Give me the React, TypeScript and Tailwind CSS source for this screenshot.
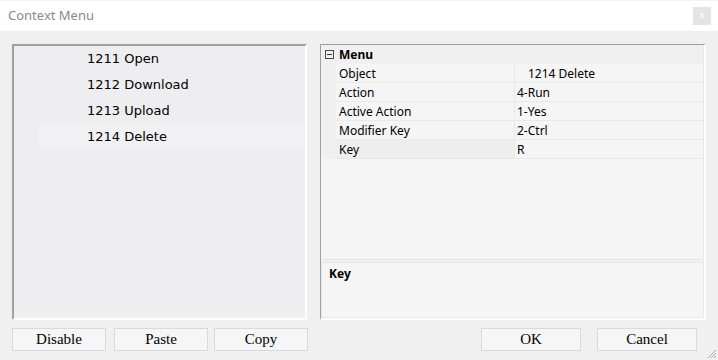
import React from "react";

const items = ["1211 Open", "1212 Download", "1213 Upload", "1214 Delete"];

const props = [
  { label: "Object", value: "1214 Delete", indent: true },
  { label: "Action", value: "4-Run" },
  { label: "Active Action", value: "1-Yes" },
  { label: "Modifier Key", value: "2-Ctrl" },
  { label: "Key", value: "R", selected: true },
];

function DlgButton({ text, className }: { text: string; className?: string }) {
  return (
    <button
      className={`h-[23px] border border-[#d9d9e1] bg-[#f6f6f6] text-[15px] leading-none text-black font-['Liberation_Serif',serif] ${className ?? ""}`}
    >
      {text}
    </button>
  );
}

export default function App() {
  return (
    <div className="w-[718px] h-[360px] flex flex-col overflow-hidden bg-[#f0f0f0] relative">
      {/* title bar */}
      <div className="h-[31px] bg-white border-t border-[#f3f3f3] flex items-center justify-between pl-[8px] pr-[7px]">
        <span className="text-[13px] text-[#8a8a8a] font-['Noto_Sans',sans-serif] -mt-[1px]">
          Context Menu
        </span>
        <div className="w-[18px] h-[18px] bg-[#e4e4e4] flex items-center justify-center text-[9px] text-white font-['DejaVu_Sans',sans-serif] -mt-[1px]">
          x
        </div>
      </div>

      {/* body */}
      <div className="flex-1 flex flex-col px-[12px] pt-[13px]">
        <div className="flex gap-[13px] h-[276px]">
          {/* left list */}
          <div className="w-[295px] border-l-2 border-t-2 border-[#a0a0a0] border-r-2 border-b-2 border-r-white border-b-white bg-[#eeeef0]">
            {items.map((it, i) => (
              <div
                key={it}
                className={`h-[26px] flex items-center text-[13px] text-black font-['DejaVu_Sans',sans-serif] ${
                  i === 3 ? "ml-[24px] pl-[49px] bg-[#f1f1f3]" : "pl-[73px]"
                }`}
              >
                {it}
              </div>
            ))}
          </div>

          {/* property grid */}
          <div className="w-[386px] border-l border-t border-[#a0a0a0] border-r-2 border-b-2 border-r-white border-b-white bg-[#f0f0f0] flex flex-col font-['Noto_Sans',sans-serif] text-[12px] text-black">
            <div className="h-[215px] bg-[#f5f5f5] border-r border-b border-[#e6e6e6] flex flex-col">
              <div className="h-[19px] bg-[#f0f0f0] flex items-center">
                <div className="ml-[4px] w-[9px] h-[9px] border border-[#4a4a4a] flex items-center justify-center">
                  <div className="w-[5px] h-[1px] bg-[#333]" />
                </div>
                <span className="ml-[5px] font-bold leading-none">Menu</span>
              </div>
              {props.map((p) => (
                <div key={p.label} className="h-[19px] flex">
                  <div className="w-[15px] bg-[#f0f0f0]" />
                  <div
                    className={`w-[178px] flex items-center pl-[3px] pt-[1px] border-b border-[#e9e9e9] ${
                      p.selected ? "bg-[#eeeeee]" : "bg-[#f5f5f5]"
                    }`}
                  >
                    {p.label}
                  </div>
                  <div
                    className={`flex-1 flex items-center pt-[1px] border-l border-b border-[#e9e9e9] bg-[#f5f5f5] ${
                      p.indent ? "pl-[13px]" : "pl-[2px]"
                    }`}
                  >
                    {p.value}
                  </div>
                </div>
              ))}
            </div>
            <div className="mt-[2px] h-[56px] bg-[#f5f5f5] border border-[#e8e8e8] pl-[7px] pt-[2px]">
              <span className="font-bold">Key</span>
            </div>
          </div>
        </div>

        {/* buttons */}
        <div className="flex mt-[8px]">
          <DlgButton text="Disable" className="w-[94px]" />
          <DlgButton text="Paste" className="w-[94px] ml-[8px]" />
          <DlgButton text="Copy" className="w-[94px] ml-[6px]" />
          <DlgButton text="OK" className="w-[100px] ml-[173px]" />
          <DlgButton text="Cancel" className="w-[100px] ml-[16px]" />
        </div>
      </div>

      {/* resize grip */}
      <svg className="absolute right-[1px] bottom-[1px]" width="12" height="12" viewBox="0 0 12 12">
        <path d="M11 3 L3 11 M11 6 L6 11 M11 9 L9 11" stroke="#a8a8a8" strokeWidth="1" />
      </svg>
    </div>
  );
}
